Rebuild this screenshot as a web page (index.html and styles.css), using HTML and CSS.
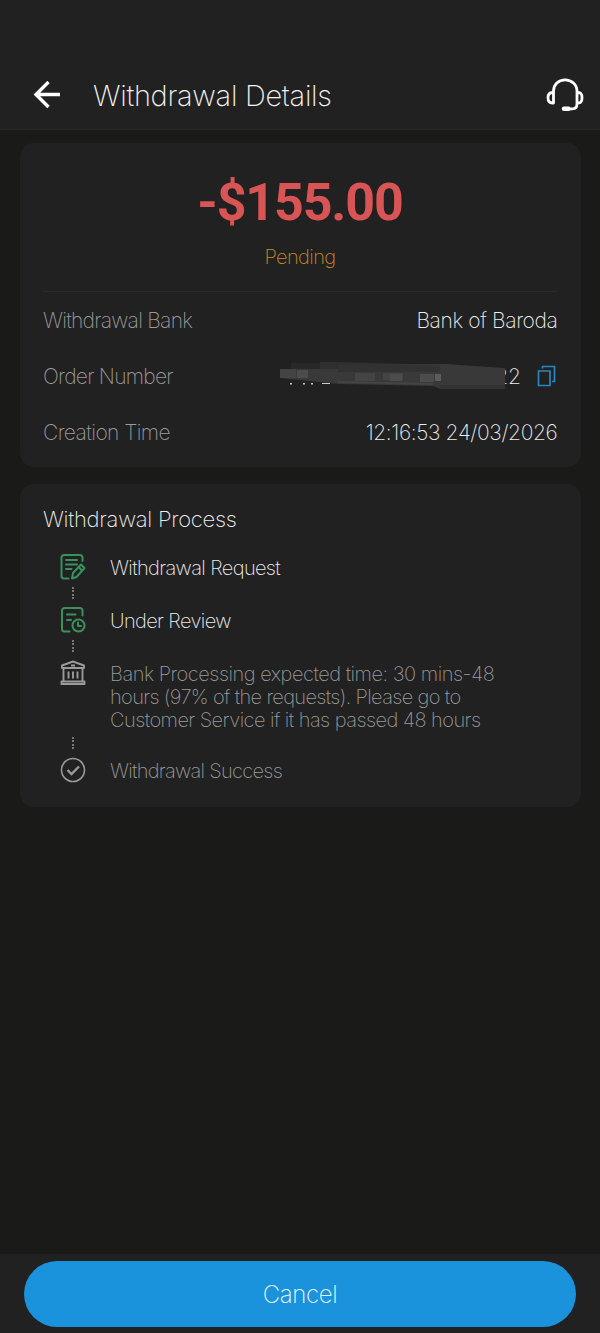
FILE: index.html
```
<!DOCTYPE html>
<html lang="en">
<head>
<meta charset="utf-8">
<title>Withdrawal Details</title>
<link rel="stylesheet" href="styles.css">
</head>
<body>
<div class="screen">
  <header class="header">
    <svg class="back" width="28" height="28" viewBox="0 0 28 28" fill="none" stroke="#fff" stroke-width="3.400"><path d="M27 13.500H3M15.500 1L3 13.500l12.500 12.500"/></svg>
    <h1 class="title">Withdrawal Details</h1>
    <svg class="support" width="40" height="36" viewBox="0 0 40 36" fill="none" stroke="#fff" stroke-width="2.800" stroke-linecap="round" stroke-linejoin="round"><path d="M9.500 26V14C9.500 7.500 14.500 2.800 21 2.800S33 7.500 33 14V27c0 3-1.500 4.800-4.500 4.800H24M9.500 15.500h-1C5.500 15.500 4 17 4 20.800s1.500 5.200 4.500 5.200h1M33 15.500h1c3 0 4 1.500 4 5.300s-1 5.200-4 5.200h-1"/><path d="M20 31.800h4.500" stroke-width="4.500"/></svg>
  </header>
  <main class="content">
    <section class="card summary">
      <div class="amount">-$155.00</div>
      <div class="status">Pending</div>
      <dl class="rows">
        <div class="row"><dt>Withdrawal Bank</dt><dd>Bank of Baroda</dd></div>
        <div class="row"><dt>Order Number</dt><dd class="order"><span>22</span>
          <svg class="mask" width="226" height="30" viewBox="0 0 226 30"><path fill="#282828" d="M11 2h50v6H11z"/><path fill="#2f2f2f" d="M40 1h20l105 3v6H40z"/><path fill="#393939" d="M0 8h58V4l107-1 60 4v21H160l-6-3-94-2-10-1-50-5z"/><path fill="#323232" d="M58 3l102 2v6H58zM160 24h65v4h-65z"/><path fill="#444" d="M0 8h16v9H0zM75 12h20v8H75zM103 12h20v7h-20zM58 20l95 2v2l-95-2z"/><path fill="#4c4c4c" d="M17 9h11v8H17zM110 13h12v7h-12zM140 13h14v8h-14z"/><path fill="#5c5c5c" d="M155 13h6v7h-6z"/><path fill="#ccc" d="M10 22h2v1.500h-2zM23 22h2v1.500h-2zM31 22h2v1.500h-2zM42 22h8v1h-8z"/></svg>
          <svg class="copy" width="20" height="22" viewBox="0 0 20 22" fill="none" stroke="#2a85bd" stroke-width="1.700"><path d="M1.500 6h11.500v14.500H1.500zM5.500 3.500V1.500h12v15h-2.500"/></svg></dd></div>
        <div class="row"><dt class="created">Creation Time</dt><dd>12:16:53 24/03/2026</dd></div>
      </dl>
    </section>
    <section class="card process">
      <h2 class="heading">Withdrawal Process</h2>
      <ol class="steps">
        <li class="step"><svg width="26" height="26" viewBox="0 0 26 26" fill="none" stroke="#37925f" stroke-width="2" stroke-linecap="round" stroke-linejoin="round"><path d="M8.500 24.500H4a2.500 2.500 0 0 1-2.500-2.500V3.500A2.500 2.500 0 0 1 4 1h16a2.500 2.500 0 0 1 2.500 2.500V7M6 6h11M6 10.500h11M6 15h5.500M12 24.500l1-5.500 8-8.500 3.500 3.500-8 9zM18.500 13l3 3"/></svg><p>Withdrawal Request</p></li>
        <li class="step"><svg width="26" height="26" viewBox="0 0 26 26" fill="none" stroke="#37925f" stroke-width="2" stroke-linecap="round" stroke-linejoin="round"><path d="M9.500 24.500H4.500A2.500 2.500 0 0 1 2 22V3.500A2.500 2.500 0 0 1 4.500 1H20a2.500 2.500 0 0 1 2.500 2.500V8.500M7 7.500h8.500M7 13h4"/><circle cx="18.500" cy="18.500" r="6"/><path d="M18 15.500v3.500h3"/></svg><p>Under Review</p></li>
        <li class="step tall muted"><svg width="26" height="26" viewBox="0 0 26 26" fill="none" stroke="#9a9a9a" stroke-width="1.900" stroke-linejoin="round"><path d="M2 8V5.500L13 1.500l11 4V8zM3.500 8v13M22.500 8v13M1.500 21.500h23v2.500h-23zM8.500 11.500v7M13 11.500v7M17.500 11.500v7M11 5.500h4"/></svg><p><span class="line-1">Bank Processing expected time: 30 mins-48</span><br><span class="line-2">hours (97% of the requests). Please go to</span><br>Customer Service if it has passed 48 hours</p></li>
        <li class="step last muted"><svg width="26" height="26" viewBox="0 0 26 26" fill="none" stroke="#9a9a9a"><circle cx="13" cy="13" r="11.500" stroke-width="1.600"/><path d="M7.500 13l4 4 7.500-7.500" stroke-width="2.400"/></svg><p>Withdrawal Success</p></li>
      </ol>
    </section>
  </main>
  <footer class="footer"><button class="cancel">Cancel</button></footer>
</div>
</body>
</html>
```
FILE: styles.css
```
* { box-sizing: border-box; margin: 0; padding: 0; }
body {
  background: #1a1a18;
  color: #ededed;
  font-family: Inter, "Liberation Sans", sans-serif;
  font-weight: 200;
}
h1, h2 { font-weight: inherit; }
.screen { height: 1333px; display: flex; flex-direction: column; }
.header {
  height: 130px;
  padding: 60px 16px 0 33px;
  display: flex;
  align-items: center;
  background: #212121;
  border-bottom: 1px solid #292929;
}
.back { flex: none; }
.title { margin-left: 32px; padding-top: 1px; flex: 1; font-size: 29px; font-weight: 250; letter-spacing: -0.300px; color: #f2f2f2; white-space: nowrap; }
.support { flex: none; }
.content { flex: 1; padding: 13px 19.500px; display: flex; flex-direction: column; gap: 17px; }
.card { background: #212121; border-radius: 14px; padding: 0 23.500px; }
.summary { height: 324px; }
.amount {
  padding-top: 29px;
  height: 91px;
  text-align: center;
  color: #d95454;
  font: 700 52px/62px Roboto, sans-serif;
  letter-spacing: -1.150px;
}
.status { height: 57px; line-height: 46px; text-align: center; font-size: 20px; letter-spacing: -0.600px; color: #c98a26; }
.rows { border-top: 1px solid #2a2a2a; }
.row { height: 56px; display: flex; justify-content: space-between; align-items: center; font-size: 21px; white-space: nowrap; }
.row dt { color: #9a9a9a; letter-spacing: -0.740px; }
.row .created { letter-spacing: -0.600px; }
.row dd { letter-spacing: -0.370px; margin-right: -0.500px; }
.order { position: relative; display: flex; align-items: center; gap: 16px; }
.row .order { margin-right: 0.500px; }
.mask { position: absolute; right: 50.500px; top: -3px; }
.process { height: 323px; padding-top: 20px; }
.heading { font-size: 22px; line-height: 30px; letter-spacing: -0.260px; }
.steps { list-style: none; padding: 20px 0 0 17px; }
.step { position: relative; display: flex; gap: 24px; height: 53px; font-size: 20px; line-height: 23px; letter-spacing: -0.550px; white-space: nowrap; }
.step svg { flex: none; }
.step p { padding-top: 3px; letter-spacing: -0.630px; }
.tall { height: 97px; }
.step.tall p { letter-spacing: -0.550px; }
.line-1 { letter-spacing: -0.490px; }
.line-2 { letter-spacing: -0.650px; }
.step.last p { letter-spacing: -0.710px; }
.muted { color: #9a9a9a; }
.step:not(:last-child)::after {
  content: "";
  position: absolute;
  left: 12px;
  bottom: 8px;
  width: 2px;
  height: 12px;
  background: repeating-linear-gradient(#777 0 2px, transparent 2px 3.300px);
}
.footer { height: 79px; padding: 7px 24px 6px; background: #212121; }
.cancel {
  width: 100%;
  height: 66px;
  border: 0;
  border-radius: 33px;
  background: #1b93dc;
  color: #eaf7ff;
  font: 200 24px Inter, sans-serif;
  letter-spacing: -0.350px;
}
```
